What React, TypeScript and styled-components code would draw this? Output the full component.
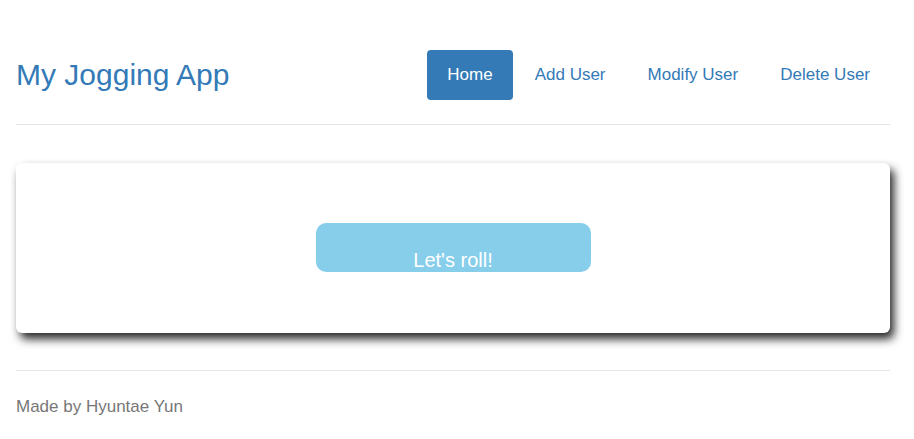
import styled, { createGlobalStyle } from 'styled-components';

const GlobalStyle = createGlobalStyle`
  body {
    margin: 0;
    background: #fff;
    font-family: "Liberation Sans", Arial, sans-serif;
  }
`;

const Page = styled.div`
  padding: 0 24px 0 16px;
`;

const Header = styled.header`
  display: flex;
  justify-content: space-between;
  align-items: center;
  padding: 50px 0 24px;
  border-bottom: 1px solid #e5e5e5;
`;

const Title = styled.h3`
  margin: 0;
  font-size: 30px;
  font-weight: 400;
  color: #337ab7;
`;

const Nav = styled.nav`
  display: flex;
  gap: 2px;
`;

const NavLink = styled.a<{ $active?: boolean }>`
  display: block;
  height: 50px;
  line-height: 50px;
  padding: 0 20px;
  border-radius: 4px;
  font-size: 17px;
  text-decoration: none;
  color: ${(p) => (p.$active ? '#fff' : '#337ab7')};
  background: ${(p) => (p.$active ? '#337ab7' : 'transparent')};
  cursor: pointer;
`;

const Main = styled.main`
  padding: 38px 0 37px;
`;

const Card = styled.div`
  display: flex;
  justify-content: center;
  align-items: center;
  height: 170px;
  background: #fff;
  border-radius: 6px;
  box-shadow: 4px 6px 10px rgba(0, 0, 0, 0.85);
`;

const RollButton = styled.button`
  box-sizing: border-box;
  width: 275px;
  height: 49px;
  margin-top: -1px;
  padding: 25px 0 0;
  border: none;
  border-radius: 10px;
  background: #87ceeb;
  color: #fff;
  font-family: "Liberation Sans", Arial, sans-serif;
  font-size: 20px;
  line-height: 20px;
  cursor: pointer;
`;

const Footer = styled.footer`
  padding-top: 26px;
  border-top: 1px solid #e5e5e5;
  color: #777;
  font-size: 17px;
`;

function App() {
  return (
    <Page>
      <GlobalStyle />
      <Header>
        <Title>My Jogging App</Title>
        <Nav>
          <NavLink $active>Home</NavLink>
          <NavLink>Add User</NavLink>
          <NavLink>Modify User</NavLink>
          <NavLink>Delete User</NavLink>
        </Nav>
      </Header>
      <Main>
        <Card>
          <RollButton>Let's roll!</RollButton>
        </Card>
      </Main>
      <Footer>Made by Hyuntae Yun</Footer>
    </Page>
  );
}

export default App;
